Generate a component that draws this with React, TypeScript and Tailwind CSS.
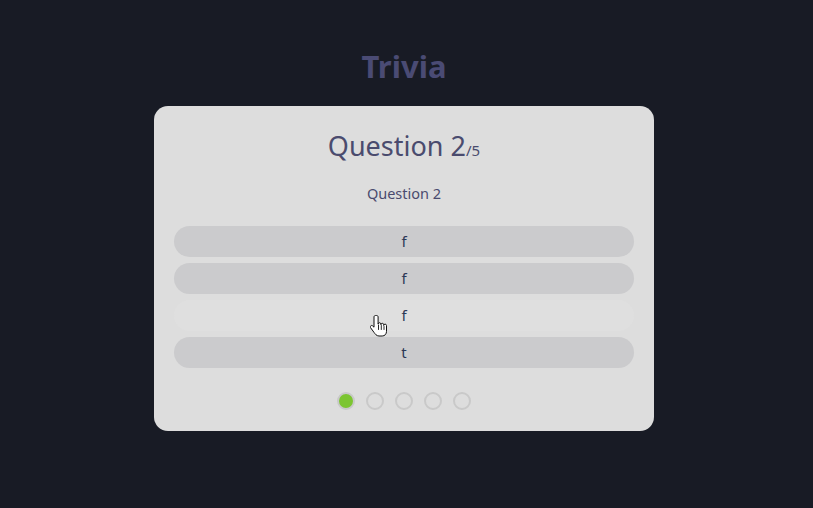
import React from "react";

const answers = ["f", "f", "f", "t"];

function HandCursor() {
  return (
    <svg
      width="18"
      height="24"
      viewBox="0 0 18 24"
      className="absolute left-[370px] top-[314px] pointer-events-none"
    >
      <path
        d="M5.5 1.5c-.9 0-1.5.6-1.5 1.5v10.2l-1.2-1.2c-.7-.7-1.7-.7-2.2 0-.5.5-.4 1.3.1 1.9l3.4 4.6c1 1.4 2.4 3.5 4.9 3.5h3.2c2.6 0 4.3-2 4.3-4.6v-5.9c0-.8-.6-1.4-1.4-1.4s-1.4.6-1.4 1.4v-.8c0-.8-.6-1.4-1.4-1.4s-1.4.6-1.4 1.4v-.6c0-.8-.6-1.4-1.4-1.4s-1.4.6-1.4 1.4V3c0-.9-.6-1.5-1.5-1.5z"
        fill="#fff"
        stroke="#111"
        strokeWidth="1"
        strokeLinejoin="round"
      />
      <path d="M8.5 11v4.5M11.3 11.5v4M14 12.5v3" stroke="#111" strokeWidth="0.9" strokeLinecap="round" />
    </svg>
  );
}

export default function App() {
  return (
    <div
      className="relative w-[813px] h-[508px] bg-[#181b25] flex flex-col items-center pr-[5px]"
      style={{ fontFamily: '"Noto Sans", "Open Sans", sans-serif' }}
    >
      <h1 className="mt-[44px] h-[44px] leading-[44px] text-[31px] font-bold text-[#4a4b74]">Trivia</h1>
      <div className="mt-[18px] w-[500px] h-[325px] rounded-[14px] bg-[#dddddd] flex flex-col items-center px-[20px]">
        <div className="mt-[22px] h-[36px] flex items-baseline text-[#4a4b6e]">
          <span className="text-[27px] leading-[36px]">Question 2</span>
          <span className="text-[15px] leading-[36px]">/5</span>
        </div>
        <div className="mt-[18px] text-[14.5px] leading-[22px] text-[#4a4b6e]">Question 2</div>
        <div className="mt-[22px] w-full flex flex-col gap-[6px]">
          {answers.map((a, i) => (
            <div
              key={i}
              className={`h-[31px] rounded-full flex items-center justify-center text-[15px] text-[#2c3856] ${
                i === 2 ? "bg-[#dfdfdf]" : "bg-[#cbcbcd]"
              }`}
            >
              {a}
            </div>
          ))}
        </div>
        <div className="mt-[24px] flex gap-[11px]">
          {[0, 1, 2, 3, 4].map((i) => (
            <div
              key={i}
              className={`w-[18px] h-[18px] rounded-full border-2 border-[#c9c9c9] ${
                i === 0 ? "bg-[#7cc531]" : "bg-transparent"
              }`}
            />
          ))}
        </div>
      </div>
      <HandCursor />
    </div>
  );
}
